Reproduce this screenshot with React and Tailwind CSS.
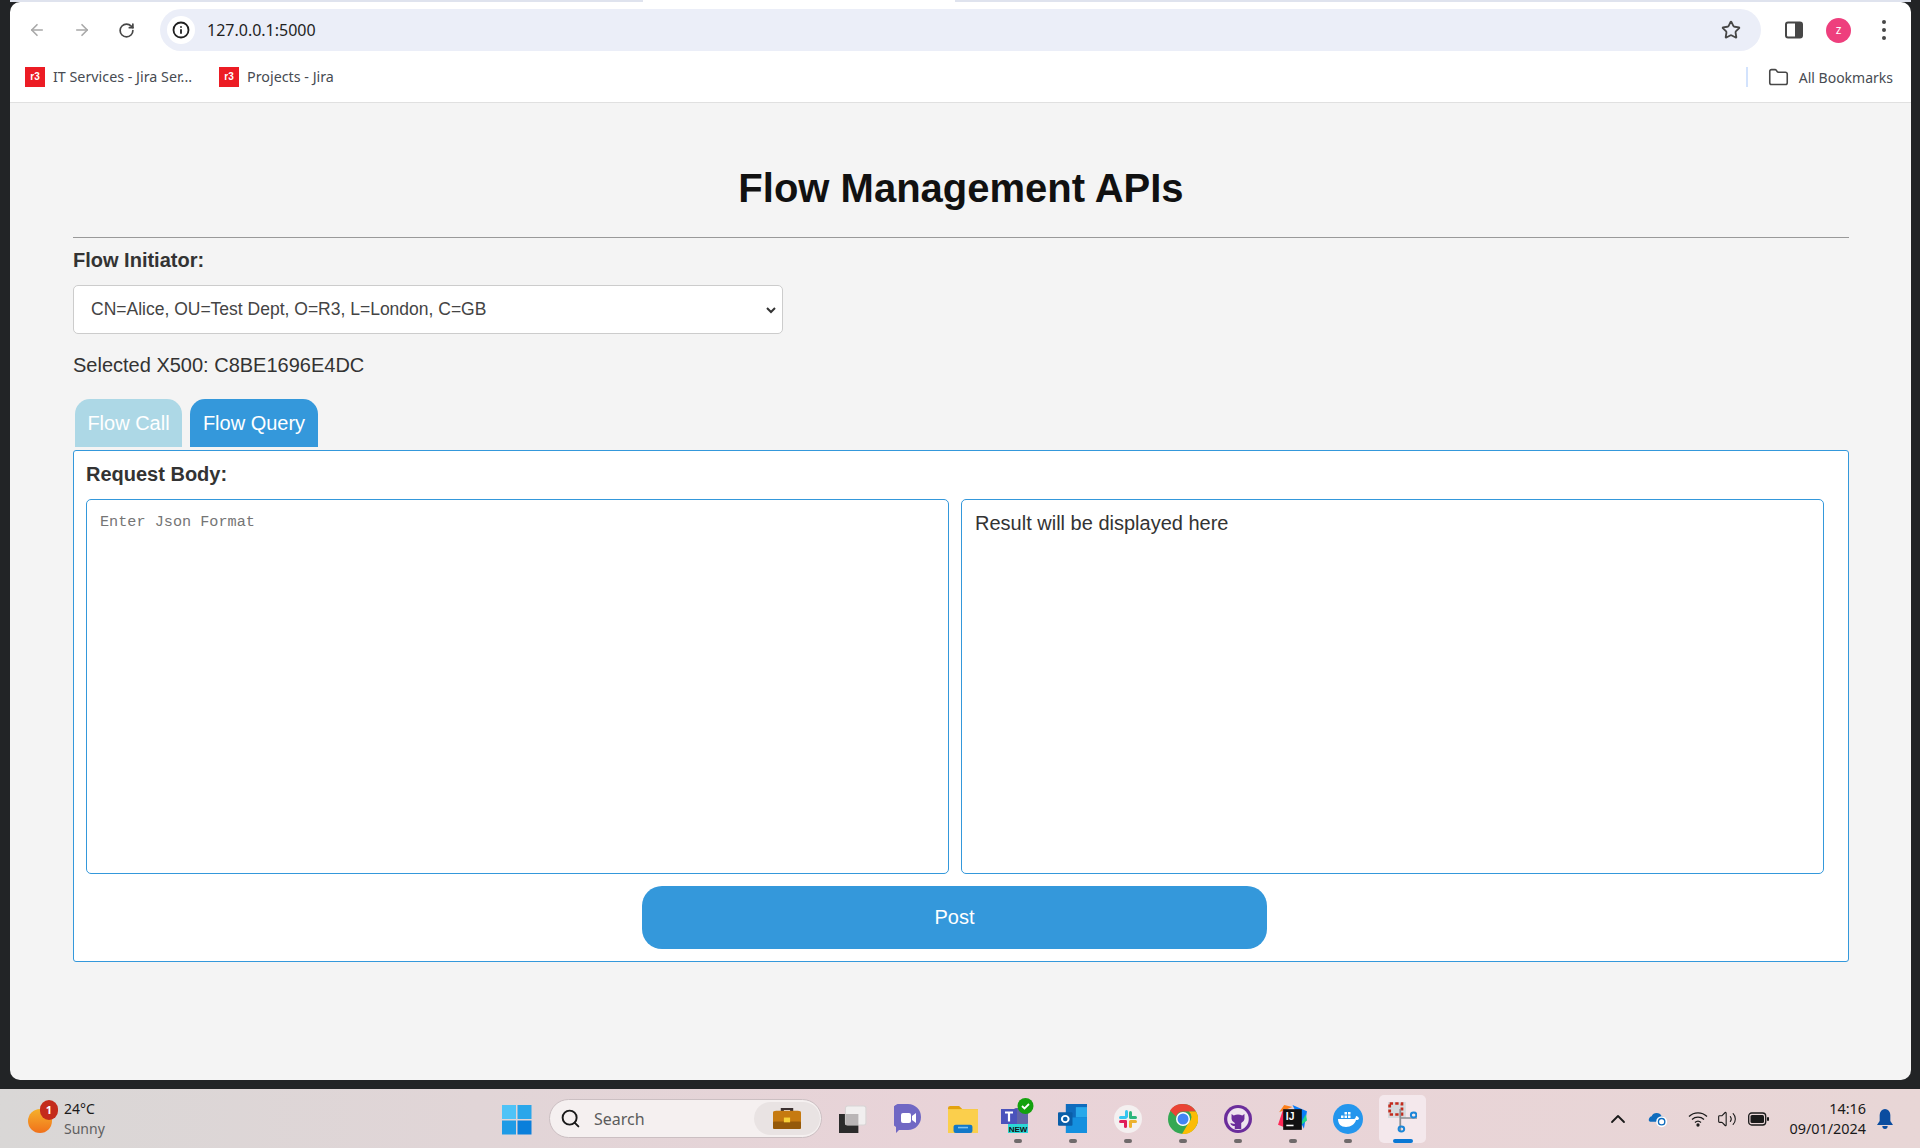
import { ArrowLeft, ArrowRight, RotateCw, Star, Info, Search, ChevronUp, Volume2, Folder } from "lucide-react";

const sans = "font-['Liberation_Sans',Arial,sans-serif]";
const ui = "font-['Noto_Sans','Open_Sans',sans-serif]";

const R3Icon = () => (
  <span className="w-5 h-5 bg-[#ec1c24] flex items-center justify-center text-white text-[10px] font-bold font-['Liberation_Sans',sans-serif] leading-none">r3</span>
);

const Toolbar = () => (
  <div className="bg-white rounded-t-[10px] border-b border-[#e0e0e0] h-[101px] shrink-0">
    <div className="flex items-center h-[42px] mt-[7px] pl-[16px] pr-[12px]">
      <ArrowLeft className="w-[18px] h-[18px] text-[#a8a8a8] ml-[2px]" strokeWidth={2.2} />
      <ArrowRight className="w-[18px] h-[18px] text-[#a8a8a8] ml-[27px]" strokeWidth={2.2} />
      <RotateCw className="w-[17px] h-[17px] text-[#474747] ml-[27px]" strokeWidth={2.4} />
      <div className="ml-[25px] w-[1601px] h-[42px] rounded-full bg-[#ebeef8] flex items-center pl-[7px] pr-[20px]">
        <span className="w-[28px] h-[28px] rounded-full bg-white flex items-center justify-center">
          <Info className="w-[18px] h-[18px] text-[#1f1f1f]" strokeWidth={2.4} />
        </span>
        <span className={`ml-[12px] text-[16px] text-[#1f1f1f] ${ui}`}>127.0.0.1:5000</span>
        <Star className="w-[20px] h-[20px] text-[#474747] ml-auto" strokeWidth={2.2} />
      </div>
      <svg className="ml-[24px]" width="18" height="18" viewBox="0 0 18 18">
        <rect x="1" y="1.5" width="16" height="15" rx="2" fill="#fff" stroke="#474747" strokeWidth="2" />
        <rect x="10" y="1.5" width="7" height="15" fill="#474747" />
      </svg>
      <span className={`ml-[23px] w-[25px] h-[25px] rounded-full bg-[#ee3f7d] text-white text-[12px] flex items-center justify-center ${ui}`}>z</span>
      <div className="ml-[31px] flex flex-col gap-[4px]">
        <span className="w-[4px] h-[4px] rounded-full bg-[#474747]" />
        <span className="w-[4px] h-[4px] rounded-full bg-[#474747]" />
        <span className="w-[4px] h-[4px] rounded-full bg-[#474747]" />
      </div>
    </div>
    <div className={`flex items-center h-[20px] mt-[16px] pl-[15px] pr-[18px] text-[14.3px] text-[#474b52] ${ui}`}>
      <R3Icon />
      <span className="ml-[8px]">IT Services - Jira Ser...</span>
      <span className="ml-[27px]"><R3Icon /></span>
      <span className="ml-[8px]">Projects - Jira</span>
      <span className="ml-auto w-[2px] h-[20px] bg-[#d3e3fd]" />
      <Folder className="w-[21px] h-[21px] text-[#474747] ml-[20px]" strokeWidth={1.8} />
      <span className="ml-[10px] text-[14px]">All Bookmarks</span>
    </div>
  </div>
);

const Page = () => (
  <div className={`flex-1 bg-[#f4f4f4] rounded-b-[10px] pl-[63px] pr-[62px] pt-[62px] text-[#333] ${sans}`}>
    <h1 className="text-[40px] font-bold text-center text-[#111] leading-[46px]">Flow Management APIs</h1>
    <div className="h-[1px] bg-[#999] mt-[26px]" />
    <div className="text-[20px] font-bold leading-[23px] mt-[11px]">Flow Initiator:</div>
    <div className="w-[710px] h-[49px] mt-[13px] bg-white border border-[#ccc] rounded-[5px] flex items-center pl-[17px] pr-[5px]">
      <span className="text-[17.5px] text-[#444]">CN=Alice, OU=Test Dept, O=R3, L=London, C=GB</span>
      <svg className="ml-auto" width="12" height="12" viewBox="0 0 12 12" fill="none" stroke="#333" strokeWidth="2"><path d="M2 4l4 4 4-4" /></svg>
    </div>
    <div className="text-[20px] leading-[23px] mt-[20px]">Selected X500: C8BE1696E4DC</div>
    <div className="flex gap-[8px] ml-[2px] mt-[22px] text-[20px] text-white">
      <div className="h-[48px] w-[107px] bg-[#add8e6] rounded-t-[15px] flex items-center justify-center">Flow Call</div>
      <div className="h-[48px] w-[128px] bg-[#3498db] rounded-t-[15px] flex items-center justify-center">Flow Query</div>
    </div>
    <div className="mt-[3px] h-[512px] bg-white border border-[#3498db] rounded-[3px] px-[12px] pt-[12px]">
      <div className="text-[20px] font-bold leading-[23px]">Request Body:</div>
      <div className="flex gap-[12px] mt-[13px] w-[1738px]">
        <div className="flex-1 h-[375px] border border-[#3498db] rounded-[5px] px-[13px] pt-[13px] font-['Liberation_Mono','DejaVu_Sans_Mono',monospace] text-[15.2px] leading-[18px] text-[#757575]">Enter Json Format</div>
        <div className="flex-1 h-[375px] border border-[#3498db] rounded-[5px] px-[13px] pt-[12px] text-[20px] leading-[23px]">Result will be displayed here</div>
      </div>
      <div className="mt-[12px] ml-[556px] w-[625px] h-[63px] pb-[2px] bg-[#3498db] rounded-[20px] text-white text-[20px] flex items-center justify-center">Post</div>
    </div>
  </div>
);

const Dot = ({ active }) => (
  <span className={`absolute bottom-[5px] left-1/2 -translate-x-1/2 h-[4px] rounded-full ${active ? "w-[20px] bg-[#0a78d4]" : "w-[8px] bg-[#6f6a6b]"}`} />
);

const TaskIcon = ({ children, dot, active }) => (
  <div className="relative w-[55px] h-[59px] flex items-center justify-center">
    {active && <span className="absolute left-[4px] top-[6px] w-[47px] h-[48px] rounded-[5px] bg-[#f4e8ec]" />}
    <span className="relative flex">{children}</span>
    {dot && <Dot active={active} />}
  </div>
);

const Taskbar = () => (
  <div className={`h-[59px] shrink-0 flex items-center bg-gradient-to-r from-[#d9d7d6] via-[#e9d3d8] to-[#e8d6d6] ${ui}`}>
    <div className="w-[502px] flex items-center pl-[28px]">
      <div className="relative w-[24px] h-[24px] mt-[5px]">
        <span className="absolute inset-0 rounded-[50%] bg-gradient-to-b from-[#f4b02c] to-[#f0701a]" />
        <span className="absolute left-[12px] -top-[9px] w-[18px] h-[20px] rounded-full bg-[#c42b1c] text-white text-[11px] font-bold flex items-center justify-center">1</span>
      </div>
      <div className="ml-[12px] text-[14px] leading-[20px]">
        <div className="text-[#1a1a1a]">24°C</div>
        <div className="text-[#5f5f5f]">Sunny</div>
      </div>
    </div>
    <svg width="30" height="30" viewBox="0 0 30 30" className="mt-[2px]">
      <rect x="0" y="0" width="14" height="14" fill="#4fc3f7" />
      <rect x="15.5" y="0" width="14" height="14" fill="#2aa6ea" />
      <rect x="0" y="15.5" width="14" height="14" fill="#1e9be6" />
      <rect x="15.5" y="15.5" width="14" height="14" fill="#0a7fdb" />
    </svg>
    <div className="ml-[17px] w-[273px] h-[39px] rounded-full bg-[#f5f0f0] border border-[#cbbfc2] flex items-center pl-[10px] pr-[1px]">
      <Search className="w-[21px] h-[21px] text-[#1a1a1a]" strokeWidth={2.2} />
      <span className="ml-[13px] text-[16px] text-[#5c5c5c]">Search</span>
      <span className="ml-auto w-[66px] h-[33px] rounded-full bg-[#e9e3e3] flex items-center justify-center">
        <svg width="28" height="23" viewBox="0 0 18 24" preserveAspectRatio="none">
          <path d="M6 5V2h6v3" fill="none" stroke="#3b3030" strokeWidth="2" />
          <rect y="4" width="18" height="19" rx="2" fill="#c67a10" />
          <rect y="15" width="18" height="8" rx="1" fill="#95590a" />
          <rect x="7" y="11" width="4" height="5" fill="#f7d038" />
        </svg>
      </span>
    </div>
    <div className="flex items-center ml-[3px]">
      <TaskIcon>
        <svg width="28" height="28" viewBox="0 0 26 28" preserveAspectRatio="none">
          <rect x="0" y="9" width="18" height="19" fill="#2b2b2b" />
          <rect x="6" y="1" width="19" height="19" rx="2" fill="#f1efef" stroke="#d8d5d5" />
          <rect x="6" y="9" width="12" height="11" fill="#b9b5b6" />
        </svg>
      </TaskIcon>
      <TaskIcon>
        <svg width="28" height="29" viewBox="0 0 26 29">
          <path d="M13 0a13 13 0 0 1 0 26H4l-3 3v-6A13 13 0 0 1 13 0z" fill="#7068c4" />
          <rect x="6" y="9" width="10" height="10" rx="2" fill="#fff" />
          <path d="M17 12l4-3v10l-4-3z" fill="#fff" />
        </svg>
      </TaskIcon>
      <TaskIcon>
        <svg width="30" height="28" viewBox="0 0 27 27" preserveAspectRatio="none">
          <path d="M0 3a2 2 0 0 1 2-2h8l3 3h14v4H0z" fill="#e3a20f" />
          <rect y="4" width="27" height="23" fill="#fbcf4c" />
          <rect x="5" y="19" width="17" height="8" rx="2" fill="#1278c8" />
          <rect x="9" y="21" width="9" height="1.5" fill="#7cc1ee" />
        </svg>
      </TaskIcon>
      <TaskIcon dot>
        <svg className="mb-[6px]" width="33" height="35" viewBox="0 0 33 35">
          <rect x="13" y="10" width="14" height="17" rx="2" fill="#6264a7" />
          <rect x="0" y="11" width="16" height="15" fill="#4b53bc" />
          <path d="M4 14.500h8M8 14.500v9" stroke="#fff" strokeWidth="2.200" />
          <circle cx="24.500" cy="8" r="8" fill="#13a10e" />
          <path d="M21 8l2.500 2.500 4.500-4.500" stroke="#fff" strokeWidth="1.800" fill="none" />
          <rect x="7" y="26" width="20" height="9" fill="#2bd6d6" />
          <text x="17" y="33.500" textAnchor="middle" fontSize="8" fontWeight="700" fill="#111" fontFamily="Liberation Sans, sans-serif">NEW</text>
        </svg>
      </TaskIcon>
      <TaskIcon dot>
        <svg width="29" height="29" viewBox="0 0 26 28" preserveAspectRatio="none">
          <rect x="7" y="0" width="19" height="14" fill="#0f6cbd" />
          <rect x="16" y="3" width="10" height="10" fill="#28a8ea" />
          <rect x="7" y="13" width="19" height="15" fill="#1490df" />
          <rect x="0" y="8" width="13" height="13" rx="1" fill="#0a5ea8" />
          <circle cx="6.5" cy="14.5" r="3" fill="none" stroke="#fff" strokeWidth="1.8" />
        </svg>
      </TaskIcon>
      <TaskIcon dot>
        <svg width="28" height="28" viewBox="0 0 28 28">
          <circle cx="14" cy="14" r="14" fill="#f4f0f0" />
          <rect x="11" y="5" width="3" height="8" rx="1.5" fill="#36c5f0" />
          <rect x="5" y="11" width="8" height="3" rx="1.5" fill="#36c5f0" />
          <rect x="15" y="6" width="3" height="8" rx="1.5" fill="#2eb67d" />
          <rect x="16" y="11" width="7" height="3" rx="1.5" fill="#2eb67d" />
          <rect x="15" y="15" width="8" height="3" rx="1.5" fill="#ecb22e" />
          <rect x="15" y="16" width="3" height="7" rx="1.5" fill="#ecb22e" />
          <rect x="5" y="15" width="8" height="3" rx="1.5" fill="#e01e5a" />
          <rect x="10" y="15" width="3" height="8" rx="1.5" fill="#e01e5a" />
        </svg>
      </TaskIcon>
      <TaskIcon dot>
        <svg width="30" height="30" viewBox="0 0 30 30">
          <circle cx="15" cy="15" r="15" fill="#34a853" />
          <path d="M15 0a15 15 0 0 1 13 7.5H15a7.5 7.5 0 0 0-7 5L2 6.5A15 15 0 0 1 15 0z" fill="#ea4335" />
          <path d="M28 7.500a15 15 0 0 1-14 22.500l6.500-11a7.500 7.500 0 0 0 .5-11.500z" fill="#fbbc05" />
          <circle cx="15" cy="15" r="7" fill="#fff" />
          <circle cx="15" cy="15" r="5.500" fill="#4285f4" />
        </svg>
      </TaskIcon>
      <TaskIcon dot>
        <svg width="28" height="28" viewBox="0 0 26 28" preserveAspectRatio="none">
          <ellipse cx="13" cy="14" rx="13" ry="14" fill="#6b2d9b" />
          <ellipse cx="13" cy="14" rx="10" ry="11" fill="#efe4ee" />
          <path d="M7 9l2 1.500a9 9 0 0 1 8 0L19 9v5a6 5 0 0 1-3 4v6h-6v-3c-3 0-4-2-4-3 1 0 2 1 4 1v-1a6 5 0 0 1-3-4z" fill="#6b2d9b" />
        </svg>
      </TaskIcon>
      <TaskIcon dot>
        <svg width="29" height="30" viewBox="0 0 28 29">
          <path d="M1 8L6 1l8 2z" fill="#fc801d" />
          <path d="M0 20L5 5l7 20z" fill="#fe2857" />
          <path d="M14 1l14 6-3 17z" fill="#087cfa" />
          <path d="M20 22l7-12 1 6z" fill="#21d789" />
          <rect x="5" y="5" width="18" height="20" fill="#111" />
          <text x="7.500" y="15" fontSize="10" fontWeight="700" fill="#fff" fontFamily="Liberation Sans, sans-serif">IJ</text>
          <rect x="8" y="20" width="7" height="1.500" fill="#fff" />
        </svg>
      </TaskIcon>
      <TaskIcon dot>
        <svg width="30" height="30" viewBox="0 0 30 30">
          <circle cx="15" cy="15" r="15" fill="#2496ed" />
          <path d="M5 15h16c1 0 2-2 2-3 1 0 3 1 3 3-1 1-2 1-3 1-1 4-5 7-10 7-5 0-8-3-8-8z" fill="#fff" />
          <rect x="8" y="11.500" width="2.500" height="2.500" fill="#fff" />
          <rect x="11.500" y="11.500" width="2.500" height="2.500" fill="#fff" />
          <rect x="15" y="11.500" width="2.500" height="2.500" fill="#fff" />
          <rect x="11.500" y="8" width="2.500" height="2.500" fill="#fff" />
          <rect x="15" y="8" width="2.500" height="2.500" fill="#fff" />
        </svg>
      </TaskIcon>
      <TaskIcon active dot>
        <svg className="mb-[4px]" width="29" height="32" viewBox="0 0 26 32" preserveAspectRatio="none">
          <rect x="0" y="1" width="16" height="16" fill="#d6dadd" />
          <rect x="1.500" y="2.500" width="11" height="11" fill="none" stroke="#c42b1c" strokeWidth="2.500" strokeDasharray="3 2" />
          <path d="M11 8v22M11 17h15" stroke="#8a8f93" strokeWidth="1.600" />
          <circle cx="23" cy="14" r="2.500" fill="none" stroke="#1b86d8" strokeWidth="1.800" />
          <circle cx="12" cy="28" r="2.500" fill="none" stroke="#1b86d8" strokeWidth="1.800" />
        </svg>
      </TaskIcon>
    </div>
    <div className="ml-auto mr-[27px] h-[59px] flex items-center text-[#1a1a1a]">
      <ChevronUp className="w-[24px] h-[24px]" strokeWidth={1.8} />
      <svg className="ml-[18px]" width="20" height="18" viewBox="0 0 22 18">
        <path d="M1 11a4 4 0 0 1 3-5 6 6 0 0 1 11 0 4 4 0 0 1 3 6H3a2 2 0 0 1-2-1z" fill="#0f6cbd" />
        <circle cx="15" cy="12" r="6" fill="#fff" />
        <circle cx="15" cy="12" r="3.500" fill="none" stroke="#0f6cbd" strokeWidth="1.500" />
      </svg>
      <svg className="ml-[20px]" width="20" height="16" viewBox="0 0 20 16" fill="none" stroke="#1a1a1a" strokeWidth="1.300">
        <path d="M1 5.500a13 13 0 0 1 18 0M4 8.500a9 9 0 0 1 12 0M7 11.500a4.500 4.500 0 0 1 6 0" />
        <circle cx="10" cy="14" r="1" fill="#1a1a1a" />
      </svg>
      <Volume2 className="w-[20px] h-[20px] ml-[9px]" strokeWidth={1.300} />
      <svg className="ml-[11px]" width="21" height="14" viewBox="0 0 21 14">
        <rect x="0.700" y="1" width="17" height="12" rx="3" fill="none" stroke="#1a1a1a" strokeWidth="1.300" />
        <rect x="2.500" y="3" width="13.500" height="8" rx="1.500" fill="#1a1a1a" />
        <rect x="19" y="5" width="2" height="4" rx="1" fill="#1a1a1a" />
      </svg>
      <div className="ml-[20px] w-[77px] text-[14.4px] leading-[20px] text-right whitespace-nowrap">
        <div>14:16</div>
        <div>09/01/2024</div>
      </div>
      <svg className="ml-[11px]" width="16" height="20" viewBox="0 0 18 20" preserveAspectRatio="none">
        <path d="M9 0a6 6 0 0 1 6 6v6l3 4H0l3-4V6a6 6 0 0 1 6-6z" fill="#0a4da0" />
        <path d="M6 17h6a3 3 0 0 1-6 0z" fill="#0a4da0" />
      </svg>
    </div>
  </div>
);

export default function App() {
  return (
    <div className="w-[1920px] h-[1148px] overflow-hidden bg-[#222426] flex flex-col">
      <div className="h-[2px] bg-[#dfe3ee] ml-[10px] mr-[9px] shrink-0 flex">
        <span className="ml-[633px] w-[312px] bg-white" />
      </div>
      <div className="h-[1078px] ml-[10px] mr-[9px] flex flex-col shrink-0">
        <Toolbar />
        <Page />
      </div>
      <div className="h-[9px] shrink-0" />
      <Taskbar />
    </div>
  );
}
